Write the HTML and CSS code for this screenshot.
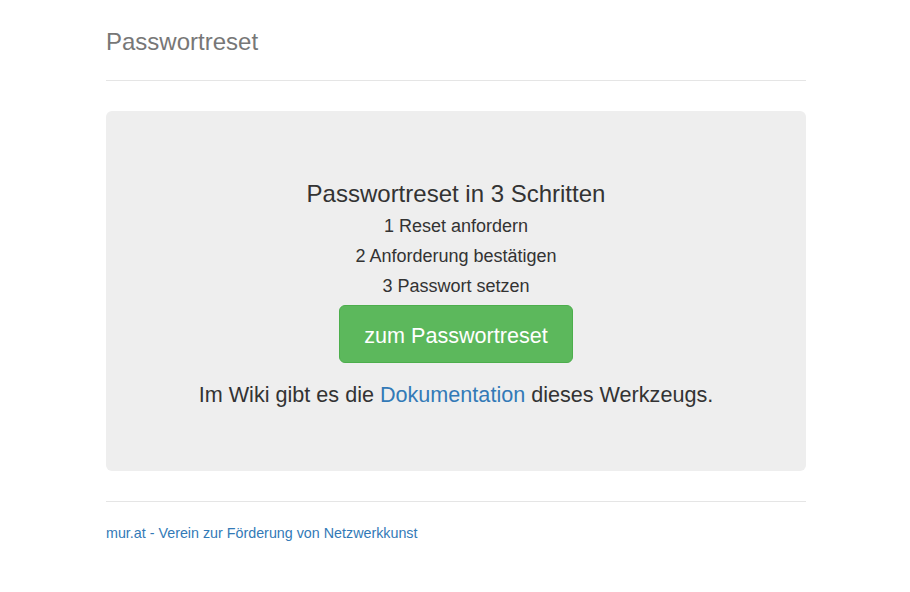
FILE: index.html
```html
<!DOCTYPE html>
<html lang="de">
<head>
<meta charset="utf-8">
<title>Passwortreset</title>
<link rel="stylesheet" href="styles.css">
</head>
<body>
<div class="container">
  <div class="header">
    <h3 class="brand">Passwortreset</h3>
  </div>
  <div class="jumbotron">
    <h3 class="title">Passwortreset in 3 Schritten</h3>
    <h4 class="step">1 Reset anfordern</h4>
    <h4 class="step">2 Anforderung bestätigen</h4>
    <h4 class="step step-last">3 Passwort setzen</h4>
    <p class="action"><a class="btn" href="#">zum Passwortreset</a></p>
    <p class="lead">Im Wiki gibt es die <a href="#">Dokumentation</a> dieses Werkzeugs.</p>
  </div>
  <div class="footer">
    <p><a href="#">mur.at - Verein zur Förderung von Netzwerkkunst</a></p>
  </div>
</div>
</body>
</html>
```
FILE: styles.css
```css
* { box-sizing: border-box; }
html, body { margin: 0; }
body {
  font-family: "Liberation Sans", Arial, Helvetica, sans-serif;
  font-size: 14px;
  line-height: 1.42857;
  color: #333;
  background: #fff;
  padding-top: 20px;
  padding-bottom: 20px;
}
a { color: #337ab7; text-decoration: none; }
.container {
  max-width: 732px;
  margin: 0 auto;
  padding: 0 15px 0 17px;
}
.header {
  padding-bottom: 16px;
  border-bottom: 1px solid #e5e5e5;
  margin-bottom: 30px;
}
.brand {
  margin: 0;
  font-size: 24px;
  font-weight: 500;
  line-height: 44px;
  color: #777;
}
.jumbotron {
  background: #eee;
  border-radius: 6px;
  padding: 50px 60px 46px;
  margin-bottom: 30px;
  text-align: center;
}
.title {
  font-size: 24px;
  font-weight: 500;
  line-height: 1.1;
  margin: 20px 0 10px;
}
.step {
  font-size: 18px;
  font-weight: 500;
  line-height: 1.1;
  margin: 10px 0;
}
.step-last { margin-bottom: 8px; }
.jumbotron p {
  font-size: 21.6px;
  font-weight: 200;
  line-height: 30px;
  margin: 0 0 15px;
}
.jumbotron p.action { line-height: 1; margin-bottom: 17px; }
.btn {
  display: inline-block;
  padding: 16px 24px 12px;
  font-size: 21.6px;
  line-height: 28px;
  font-weight: 400;
  color: #fff;
  background: #5cb85c;
  border: 1px solid #4cae4c;
  border-radius: 6px;
  vertical-align: middle;
}
.footer {
  padding-top: 21px;
  color: #777;
  border-top: 1px solid #e5e5e5;
  font-size: 14.3px;
}
.footer p { margin: 0 0 10px; }
```
